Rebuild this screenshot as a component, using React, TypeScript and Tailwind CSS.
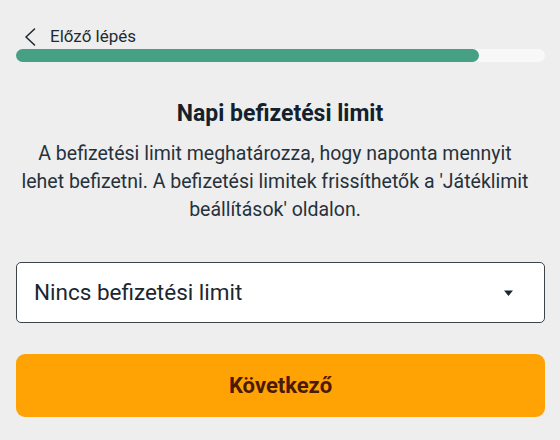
export default function App() {
  return (
    <div className="w-[560px] h-[440px] bg-[#eeeeee] px-4 pt-[25px] font-['Roboto',sans-serif] text-[#1d2b36]">
      <button className="flex items-center h-6 pl-[8px] text-[17px] text-[#1f2a33]">
        <svg width="12" height="18" viewBox="0 0 12 18" fill="none">
          <polyline points="10.5,1 2,9 10.5,17" stroke="#1f2a33" strokeWidth="1.6" strokeLinecap="round" strokeLinejoin="round" />
        </svg>
        <span className="ml-[14px]">Előző lépés</span>
      </button>

      <div className="h-[13px] w-[529px] rounded-full bg-[#f8f8f8]">
        <div className="h-full w-[463px] rounded-full bg-[#46a084]" />
      </div>

      <h1 className="mt-[37px] text-center text-[23px] leading-[30px] font-bold text-[#13212c]">
        Napi befizetési limit
      </h1>
      <p className="mt-[11px] pr-[10px] text-center text-[19.5px] leading-[28px] text-[#26323b]">
        A befizetési limit meghatározza, hogy naponta mennyit lehet befizetni. A befizetési limitek frissíthetők a 'Játéklimit beállítások' oldalon.
      </p>

      <div className="mt-[38px] h-[61px] w-[529px] flex items-center justify-between rounded-[5px] border border-[#3c434a] bg-white pl-[17px] pr-[31px]">
        <span className="text-[22.5px] text-[#1b2730]">Nincs befizetési limit</span>
        <svg width="9" height="6" viewBox="0 0 9 6" className="mt-[1px]">
          <path d="M0 0.5 H9 L4.5 6 Z" fill="#1b2730" />
        </svg>
      </div>

      <button className="mt-[31px] h-[63px] w-[529px] rounded-[9px] bg-[#ffa305] text-[22px] font-bold text-[#4a1a04]">
        Következő
      </button>
    </div>
  );
}
